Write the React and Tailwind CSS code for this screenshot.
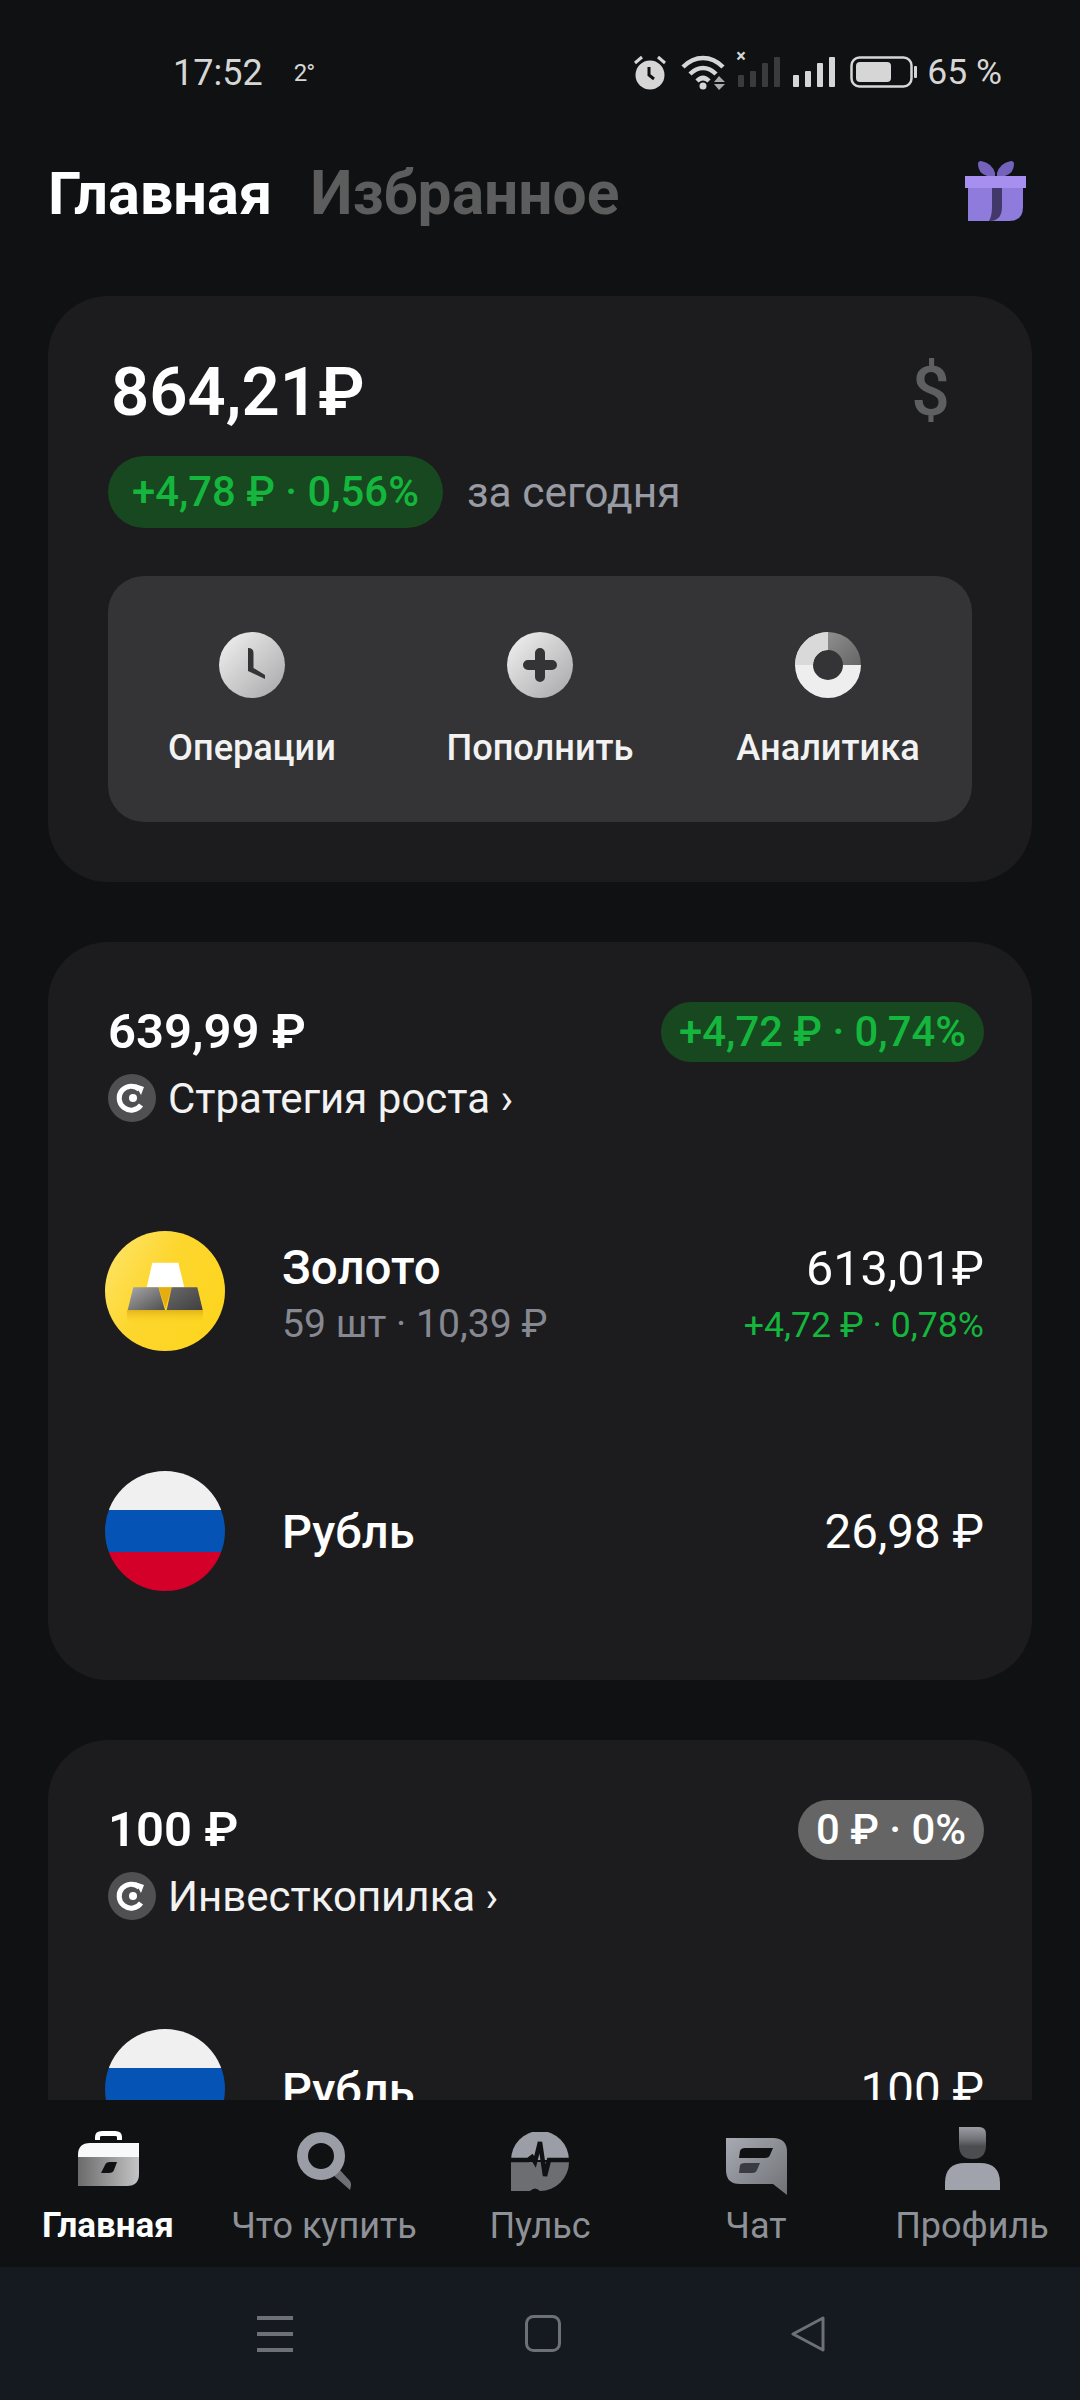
import React from "react";

const G = "#15b63d";

function Pill({ children, grey, big }) {
  return (
    <div className={`flex items-center justify-center rounded-full whitespace-nowrap text-[41.800px] font-medium ${big ? "h-[72px] px-[24px]" : "h-[60px] px-[18px]"} ${grey ? "bg-[#656565] text-white" : "bg-[#17481f] text-[#15b63d]"}`}>
      {children}
    </div>
  );
}

function Flag() {
  return (
    <div className="flex h-[120px] w-[120px] shrink-0 flex-col overflow-hidden rounded-full">
      <div className="h-[39px] bg-[#f0f0f0]" />
      <div className="h-[42px] bg-[#0553b5]" />
      <div className="h-[39px] bg-[#d50029]" />
    </div>
  );
}

function Gold() {
  return (
    <svg width="120" height="120" viewBox="0 0 120 120" className="shrink-0">
      <defs>
        <linearGradient id="gy" x1="0" y1="0" x2="1" y2="0.6"><stop offset="0" stopColor="#fde66f" /><stop offset="0.5" stopColor="#fdd62e" /><stop offset="1" stopColor="#fdd520" /></linearGradient>
        <linearGradient id="gs" x1="0" y1="0" x2="0" y2="1"><stop offset="0" stopColor="#c9980a" stopOpacity="0.55" /><stop offset="1" stopColor="#fdd520" stopOpacity="0" /></linearGradient>
        <linearGradient id="gl" x1="0" y1="0" x2="1" y2="1"><stop offset="0" stopColor="#a8a8a8" /><stop offset="1" stopColor="#4f4f4f" /></linearGradient>
        <linearGradient id="gr" x1="0" y1="0" x2="1" y2="1"><stop offset="0" stopColor="#6a6a6a" /><stop offset="1" stopColor="#3f3f3f" /></linearGradient>
      </defs>
      <circle cx="60" cy="60" r="60" fill="url(#gy)" />
      <rect x="22" y="79" width="76" height="14" fill="url(#gs)" />
      <polygon points="47.3,31.7 73.3,31.7 79.3,56.3 41.7,56.3" fill="#ffffff" />
      <polygon points="53.3,56.3 66.7,56.3 60.5,77" fill="#e6ad10" />
      <polygon points="28.3,56.3 53.3,56.3 60,79 22.7,79" fill="url(#gl)" />
      <polygon points="66.7,56.3 92.3,56.3 97.7,79 61.7,79" fill="url(#gr)" />
    </svg>
  );
}

function Strat() {
  return (
    <svg width="48" height="48" viewBox="0 0 48 48" className="shrink-0">
      <circle cx="24" cy="24" r="24" fill="#505052" />
      <path d="M31.5 15.5A12 12 0 1 0 33 31" fill="none" stroke="#fff" strokeWidth="5" />
      <polygon points="27,10 36,13 33,21" fill="#fff" />
      <circle cx="25" cy="24" r="4" fill="#fff" />
    </svg>
  );
}

function Header({ value, pill, grey, name }) {
  return (
    <>
      <div className="flex h-[60px] items-center justify-between">
        <div className="text-[49px] font-semibold text-white">{value}</div>
        <Pill grey={grey}>{pill}</Pill>
      </div>
      <div className="mt-[12px] flex h-[48px] items-center gap-[12px] text-[42px] text-[#f2f2f2]">
        <Strat />
        <span className="pt-[1px]">{name}</span>
      </div>
    </>
  );
}

function Action({ icon, label }) {
  return (
    <div className="flex flex-col items-center">
      {icon}
      <div className="mt-[30px] text-[36.2px] font-medium leading-[40px] text-[#f2f2f2]">{label}</div>
    </div>
  );
}

const ClockI = (
  <svg width="66" height="66" viewBox="0 0 66 66">
    <defs>
      <linearGradient id="ac" x1="0" y1="0" x2="1" y2="1"><stop offset="0" stopColor="#f3f3f3" /><stop offset="1" stopColor="#a6a6a8" /></linearGradient>
    </defs>
    <circle cx="33" cy="33" r="33" fill="url(#ac)" />
    <path d="M29 16q5.500 0 5.500 5V36L46 43V47L29 39Z" fill="#343436" />
  </svg>
);
const PlusI = (
  <svg width="66" height="66" viewBox="0 0 66 66">
    <circle cx="33" cy="33" r="33" fill="url(#ac)" />
    <path d="M33 21V45M21 33H45" stroke="#343436" strokeWidth="10" strokeLinecap="round" />
  </svg>
);
const DonutI = (
  <svg width="66" height="66" viewBox="0 0 66 66">
    <defs>
      <linearGradient id="ad" x1="0" y1="0" x2="1" y2="1"><stop offset="0" stopColor="#8f8f8f" /><stop offset="1" stopColor="#656566" /></linearGradient>
    </defs>
    <path d="M33 0A33 33 0 1 0 66 33H48A15 15 0 1 1 33 18Z" fill="#eeeeef" />
    <path d="M33 0A33 33 0 0 0 0 33H18A15 15 0 0 1 33 18Z" fill="#d9d9da" />
    <path d="M33 0A33 33 0 0 1 66 33H48A15 15 0 0 0 33 18Z" fill="url(#ad)" />
  </svg>
);

function Tab({ icon, label, active }) {
  return (
    <div className="flex flex-col items-center">
      <div className="flex h-[72px] items-start justify-center">{icon}</div>
      <div className={`mt-[10px] leading-[40px] whitespace-nowrap ${active ? "text-[35px] font-bold text-white" : "text-[36px] text-[#8f9198]"}`}>{label}</div>
    </div>
  );
}

function Bars({ color }) {
  return (
    <div className="flex h-[30px] items-end gap-[6px]">
      {[12, 16, 24, 30].map((h) => (
        <div key={h} className="w-[6px] rounded-[1px]" style={{ height: h, background: color }} />
      ))}
    </div>
  );
}

export default function App() {
  return (
    <div className="flex h-[2400px] w-[1080px] flex-col overflow-hidden bg-[#101112] font-['Roboto',sans-serif]">
      {/* status bar */}
      <div className="flex h-[144px] shrink-0 items-center justify-between pl-[173px] pr-[78px] text-[#d6d6d6]">
        <div className="flex items-center pt-[2px]">
          <span className="text-[36px]">17:52</span>
          <span className="ml-[31px] text-[24px] tracking-[-1px]">2°</span>
        </div>
        <div className="flex items-center">
          <svg width="36" height="36" viewBox="0 0 36 36" className="mr-[13px]">
            <circle cx="18" cy="21" r="14.500" fill="#d6d6d6" />
            <path d="M3 9L10 3M33 9L26 3" stroke="#d6d6d6" strokeWidth="3" />
            <path d="M17 13V21L22 25" stroke="#101112" strokeWidth="3" fill="none" />
          </svg>
          <svg width="46" height="36" viewBox="0 0 46 36" className="mr-[11px]">
            <path d="M2 13C14 1 30 1 42 13M9 20C17 12 27 12 35 20M16 27C20 23 24 23 28 27" fill="none" stroke="#d6d6d6" strokeWidth="4.500" />
            <circle cx="22" cy="32" r="3.500" fill="#d6d6d6" />
            <path d="M33 28L38 22L44 28ZM33 30L38 36L44 30Z" fill="#a9a9a9" />
          </svg>
          <div className="relative mr-[13px]">
            <Bars color="#3b3b3c" />
            <span className="absolute -left-[2px] -top-[10px] text-[18px] font-bold leading-[18px] text-[#d6d6d6]">×</span>
          </div>
          <div className="mr-[15px]"><Bars color="#d6d6d6" /></div>
          <svg width="68" height="32" viewBox="0 0 68 32" className="mr-[9px]">
            <rect x="1.500" y="1.500" width="60" height="29" rx="8" fill="none" stroke="#d6d6d6" strokeWidth="2.500" />
            <rect x="6" y="6" width="35" height="20" rx="4" fill="#d6d6d6" />
            <rect x="64" y="10" width="3" height="12" rx="1" fill="#d6d6d6" />
          </svg>
          <span className="pt-[2px] text-[35.500px]">65 %</span>
        </div>
      </div>

      {/* title */}
      <div className="flex h-[152px] shrink-0 items-start justify-between pl-[48px] pr-[54px]">
        <div className="flex gap-[38px] pt-[15px] font-bold leading-[70px]">
          <span className="text-[59.5px] text-white">Главная</span>
          <span className="text-[60.5px] text-[#5d5d5d]">Избранное</span>
        </div>
        <svg width="61" height="60" viewBox="0 0 61 60" className="mt-[17px]">
          <path d="M13 3Q13 0 16 0Q27 2 30 12V15H22Q13 12 13 3Z" fill="#7462bc" />
          <path d="M49 3Q49 0 46 0Q35 2 32 12V15H40Q49 12 49 3Z" fill="#7462bc" />
          <path d="M58 27V46Q58 60 44 60H3V27Z" fill="#8e7bdb" />
          <path d="M27 27H37V46Q37 60 24 60Q27 55 27 46Z" fill="#43386a" />
          <rect x="0" y="15" width="61" height="12" fill="#a78ff0" />
        </svg>
      </div>

      {/* content */}
      <div className="flex min-h-0 flex-1 flex-col gap-[60px] overflow-hidden px-[48px]">
        <section className="shrink-0 rounded-[60px] bg-[#1c1c1e] px-[60px] pb-[60px] pt-[60px]">
          <div className="flex h-[72px] items-center justify-between pl-[3px] pr-[22px]">
            <span className="text-[67px] font-semibold leading-[72px] text-white">864,21₽</span>
            <span className="text-[68px] font-medium leading-[72px] text-[#5e5f60]">$</span>
          </div>
          <div className="mt-[28px] flex items-center gap-[24px]">
            <Pill big>+4,78 ₽ · 0,56%</Pill>
            <span className="pt-[2px] text-[42.500px] text-[#989ba3]">за сегодня</span>
          </div>
          <div className="mt-[48px] grid h-[246px] grid-cols-3 rounded-[36px] bg-[#343436] pt-[56px]">
            <Action icon={ClockI} label="Операции" />
            <Action icon={PlusI} label="Пополнить" />
            <Action icon={DonutI} label="Аналитика" />
          </div>
        </section>

        <section className="shrink-0 rounded-[60px] bg-[#1c1c1e] px-[48px] pb-[89px] pl-[60px] pt-[60px]">
          <Header value="639,99 ₽" pill="+4,72 ₽ · 0,74%" name="Стратегия роста ›" />
          <div className="-ml-[3px] mt-[109px] flex h-[120px] items-center">
            <Gold />
            <div className="ml-[57px] flex-1 pt-[5px]">
              <div className="text-[47.500px] font-medium leading-[54px] text-white">Золото</div>
              <div className="mt-[7px] text-[39.200px] leading-[44px] text-[#868991]">59 шт · 10,39 ₽</div>
            </div>
            <div className="pt-[6px] text-right">
              <div className="text-[48.500px] leading-[54px] text-white">613,01₽</div>
              <div className="mt-[7px] text-[35.700px] leading-[44px]" style={{ color: G }}>+4,72 ₽ · 0,78%</div>
            </div>
          </div>
          <div className="-ml-[3px] mt-[120px] flex h-[120px] items-center">
            <Flag />
            <div className="ml-[57px] flex-1 pt-[2px] text-[47px] font-medium text-white">Рубль</div>
            <div className="pt-[3px] text-[47.500px] text-white">26,98 ₽</div>
          </div>
        </section>

        <section className="shrink-0 rounded-[60px] bg-[#1c1c1e] px-[48px] pb-[89px] pl-[60px] pt-[60px]">
          <Header value="100 ₽" grey pill="0 ₽ · 0%" name="Инвесткопилка ›" />
          <div className="-ml-[3px] mt-[109px] flex h-[120px] items-center">
            <Flag />
            <div className="ml-[57px] flex-1 pt-[2px] text-[47px] font-medium text-white">Рубль</div>
            <div className="pt-[3px] text-[47.500px] text-white">100 ₽</div>
          </div>
        </section>
      </div>

      {/* tab bar */}
      <div className="grid h-[167px] shrink-0 grid-cols-5 bg-[#101112] pt-[24px]">
        <Tab active label="Главная" icon={
          <svg width="61" height="56" viewBox="0 0 61 56" className="mt-[6px]">
            <defs>
              <linearGradient id="t1" x1="0" y1="0" x2="1" y2="0"><stop offset="0" stopColor="#6b6b6b" /><stop offset="1" stopColor="#c4c4c4" /></linearGradient>
              <linearGradient id="t2" x1="0" y1="0" x2="1" y2="1"><stop offset="0" stopColor="#a7aab2" /><stop offset="1" stopColor="#6f7176" /></linearGradient>
            </defs>
            <path d="M17 10V7Q17 1 24 1H37Q44 1 44 7V10H39V7Q39 6 37 6H24Q22 6 22 7V10Z" fill="#fff" />
            <path d="M0 27V25Q0 13 12 13H61V27Z" fill="#f8f9fa" />
            <path d="M0 27H61V44Q61 56 49 56H0Z" fill="url(#t1)" />
            <path d="M27 35Q28 32 32 32H39L36 40Q35 43 31 43H23Z" fill="#101112" />
          </svg>
        } />
        <Tab label="Что купить" icon={
          <svg width="55" height="58" viewBox="0 0 55 58" className="mt-[8px]">
            <path d="M35 42L42 37L53 49Q55 52 53 58Z" fill="#6e7075" />
            <circle cx="24" cy="24" r="18.500" fill="none" stroke="#9a9da6" strokeWidth="11" />
          </svg>
        } />
        <Tab label="Пульс" icon={
          <svg width="58" height="59" viewBox="0 0 58 59" className="mt-[8px]">
            <path d="M0 28A29 29 0 0 1 58 28Z" fill="#9b9ea6" />
            <path d="M0 30H58A29 29 0 0 1 29 59Q24 54 19 59H0Z" fill="#6c6e72" />
            <path d="M0 28H17L21 25L24 30L29 10L34 44L38 28H58" fill="none" stroke="#101112" strokeWidth="4.500" />
          </svg>
        } />
        <Tab label="Чат" icon={
          <svg width="61" height="57" viewBox="0 0 61 57" className="mt-[14px]">
            <path d="M0 0H47Q61 0 61 14V57L47 46H14Q0 46 0 32Z" fill="url(#t2)" />
            <path d="M14 13Q15 10 19 10H47L44 17Q43 20 39 20H13Z" fill="#101112" />
            <path d="M14 27Q15 25 19 25H34L31 32Q30 35 26 35H13Z" fill="#3a3c42" />
          </svg>
        } />
        <Tab label="Профиль" icon={
          <svg width="55" height="66" viewBox="0 0 55 66" className="mt-[3px]">
            <defs>
              <linearGradient id="t3" x1="0" y1="0" x2="0" y2="1"><stop offset="0" stopColor="#9b9ea6" /><stop offset="0.4" stopColor="#6f7075" /><stop offset="0.6" stopColor="#4c4d51" /></linearGradient>
            </defs>
            <path d="M14 0H34Q41 0 41 7V18Q41 32 27.500 32Q14 32 14 18Z" fill="url(#t3)" />
            <path d="M0 63V56Q0 36 20 36H35Q55 36 55 56V63Z" fill="#a0a3ab" />
          </svg>
        } />
      </div>

      {/* system nav */}
      <div className="flex h-[133px] shrink-0 items-center gap-[232px] bg-[#151a20] pl-[257px]">
        <svg width="36" height="38" viewBox="0 0 36 38">
          <path d="M0 3H36M0 19H36M0 35H36" stroke="#6d7177" strokeWidth="4" />
        </svg>
        <svg width="36" height="37" viewBox="0 0 36 37">
          <rect x="1.500" y="1.500" width="33" height="34" rx="7" fill="none" stroke="#6d7177" strokeWidth="3" />
        </svg>
        <svg width="34" height="36" viewBox="0 0 34 36" className="-ml-[2px]">
          <path d="M32 2V34L2 18Z" fill="none" stroke="#6d7177" strokeWidth="3" strokeLinejoin="round" />
        </svg>
      </div>
    </div>
  );
}
